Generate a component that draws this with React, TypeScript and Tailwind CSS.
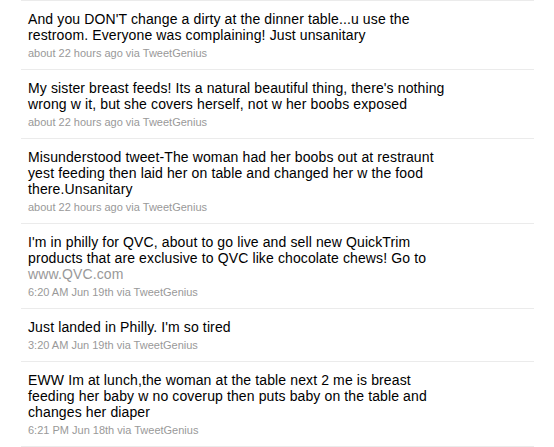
const tweets = [
  {
    text: "And you DON'T change a dirty at the dinner table...u use the restroom. Everyone was complaining! Just unsanitary",
    meta: 'about 22 hours ago',
  },
  {
    text: "My sister breast feeds! Its a natural beautiful thing, there's nothing wrong w it, but she covers herself, not w her boobs exposed",
    meta: 'about 22 hours ago',
  },
  {
    text: 'Misunderstood tweet-The woman had her boobs out at restraunt yest feeding then laid her on table and changed her w the food there.Unsanitary',
    meta: 'about 22 hours ago',
  },
  {
    text: "I'm in philly for QVC, about to go live and sell new QuickTrim products that are exclusive to QVC like chocolate chews! Go to",
    link: 'www.QVC.com',
    meta: '6:20 AM Jun 19th',
  },
  {
    text: "Just landed in Philly. I'm so tired",
    meta: '3:20 AM Jun 19th',
  },
  {
    text: 'EWW Im at lunch,the woman at the table next 2 me is breast feeding her baby w no coverup then puts baby on the table and changes her diaper',
    meta: '6:21 PM Jun 18th',
  },
];

export default function App() {
  return (
    <div className="bg-white w-[554px] h-[447px] overflow-hidden font-['Liberation_Sans',Arial,sans-serif]">
      <ul className="ml-[21px] w-[513px] border-b border-[#ebebeb]">
        {tweets.map((t, i) => (
          <li key={i} className="border-t border-[#ebebeb] pt-[10px] pb-[9px] pl-[7px]">
            <p className="w-[426px] text-[14px] leading-[16px] tracking-[0.12px] text-black">
              {t.text}
              {t.link && (
                <>
                  {' '}
                  <a className="text-[#999999]">{t.link}</a>
                </>
              )}
            </p>
            <p className="mt-[3px] text-[11px] leading-[14px] text-[#999999]">
              {t.meta} via <a>TweetGenius</a>
            </p>
          </li>
        ))}
      </ul>
    </div>
  );
}
